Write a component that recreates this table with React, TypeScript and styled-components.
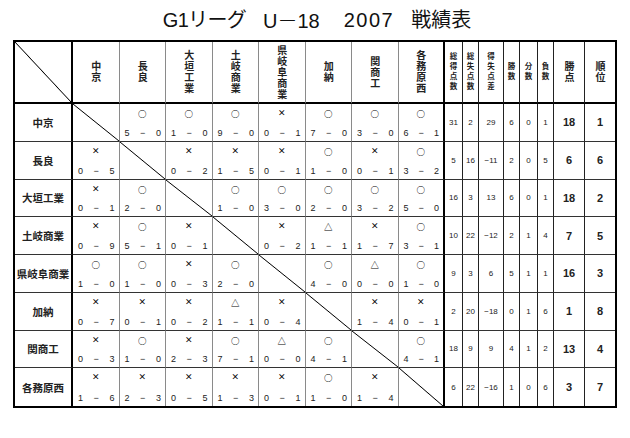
import React from "react";
import styled, { createGlobalStyle, css } from "styled-components";

const Global = createGlobalStyle`
  * { box-sizing: border-box; }
  html, body { margin: 0; padding: 0; background: #fff; }
  body {
    font-family: "Liberation Sans", "Noto Sans CJK JP", sans-serif;
    color: #111;
  }
`;

const Page = styled.div`
  width: 630px;
  height: 438px;
  padding-top: 8px;
`;

const Title = styled.h1`
  margin: 0;
  display: flex;
  justify-content: center;
  font-size: 20px;
  line-height: 24px;
  font-weight: 400;
  color: #111;
  white-space: pre;
  padding-left: 4px;
`;

const TitlePart = styled.span<{ $gap?: number; $spacing?: number }>`
  margin-left: ${(p) => p.$gap ?? 0}px;
  letter-spacing: ${(p) => p.$spacing ?? 0}px;
`;

const Dash = styled.span`
  font-family: "Noto Sans CJK JP", sans-serif;
  font-weight: 300;
`;

const Grid = styled.div`
  margin: 7px 0 0 13px;
  width: max-content;
  display: grid;
  grid-template-columns: 58px repeat(8, 46.5px) 18px 16px 25px 16px 18px 16px 31px 30px;
  grid-template-rows: 62px repeat(8, 37.75px);
  border: 2px solid #000;
`;

const diagonal = css`
  background: linear-gradient(
    to top right,
    transparent calc(50% - 0.8px),
    #000 50%,
    transparent calc(50% + 0.8px)
  );
`;

const Corner = styled.div`
  border-right: 2px solid #000;
  border-bottom: 2px solid #000;
  ${diagonal}
`;

const TeamHead = styled.div<{ $last?: boolean }>`
  border-bottom: 2px solid #000;
  border-right: ${(p) => (p.$last ? "2px solid #000" : "1px solid #8a8a8a")};
  display: flex;
  align-items: center;
  justify-content: center;
`;

const StatHead = styled.div<{ $last?: boolean }>`
  border-bottom: 2px solid #000;
  border-right: ${(p) => (p.$last ? "none" : "1px solid #222")};
  display: flex;
  align-items: center;
  justify-content: center;
`;

const Vertical = styled.span<{ $size: number; $pitch: number }>`
  writing-mode: vertical-rl;
  text-orientation: upright;
  font-family: "Noto Sans CJK JP", sans-serif;
  font-size: ${(p) => p.$size}px;
  line-height: 1.2;
  letter-spacing: ${(p) => p.$pitch - p.$size}px;
  font-weight: 700;
  color: #222;
  white-space: nowrap;
`;

const RowName = styled.div<{ $last?: boolean }>`
  border-right: 2px solid #000;
  border-bottom: ${(p) => (p.$last ? "none" : "1px solid #333")};
  display: flex;
  align-items: center;
  justify-content: center;
  font-family: "Noto Sans CJK JP", sans-serif;
  font-size: 10.5px;
  font-weight: 700;
  color: #222;
  white-space: nowrap;
`;

const Result = styled.div<{ $lastCol?: boolean; $lastRow?: boolean; $diag?: boolean }>`
  border-right: ${(p) => (p.$lastCol ? "2px solid #000" : "1px solid #8a8a8a")};
  border-bottom: ${(p) => (p.$lastRow ? "none" : "1px solid #333")};
  display: flex;
  flex-direction: column;
  justify-content: space-between;
  padding: 3px 0 2px;
  ${(p) => (p.$diag ? diagonal : "")}
`;

const Mark = styled.div<{ $small?: boolean }>`
  text-align: center;
  font-family: "Noto Sans CJK JP", sans-serif;
  font-size: ${(p) => (p.$small ? "8px" : "8.5px")};
  font-weight: 700;
  line-height: 12px;
  color: #000;
`;

const Score = styled.div`
  display: flex;
  justify-content: space-between;
  padding: 0 4px 0 5px;
  font-size: 9px;
  line-height: 12px;
  color: #222;
`;

const Stat = styled.div<{ $big?: boolean; $last?: boolean; $lastRow?: boolean }>`
  border-right: ${(p) => (p.$last ? "none" : "1px solid #222")};
  border-bottom: ${(p) => (p.$lastRow ? "none" : "1px solid #333")};
  display: flex;
  align-items: center;
  justify-content: center;
  font-size: ${(p) => (p.$big ? "11px" : "8px")};
  font-weight: ${(p) => (p.$big ? 700 : 400)};
  color: #222;
  white-space: nowrap;
`;

const teams = ["中京", "長良", "大垣工業", "土岐商業", "県岐阜商業", "加納", "関商工", "各務原西"];

const statHeads: { label: string; big?: boolean }[] = [
  { label: "総得点数" },
  { label: "総失点数" },
  { label: "得失点差" },
  { label: "勝数" },
  { label: "分数" },
  { label: "負数" },
  { label: "勝点", big: true },
  { label: "順位", big: true },
];

type R = [string, number, number] | null;

const results: R[][] = [
  [null, ["○", 5, 0], ["○", 1, 0], ["○", 9, 0], ["×", 0, 1], ["○", 7, 0], ["○", 3, 0], ["○", 6, 1]],
  [["×", 0, 5], null, ["×", 0, 2], ["×", 1, 5], ["×", 0, 1], ["○", 1, 0], ["×", 0, 1], ["○", 3, 2]],
  [["×", 0, 1], ["○", 2, 0], null, ["○", 1, 0], ["○", 3, 0], ["○", 2, 0], ["○", 3, 2], ["○", 5, 0]],
  [["×", 0, 9], ["○", 5, 1], ["×", 0, 1], null, ["×", 0, 2], ["△", 1, 1], ["×", 1, 7], ["○", 3, 1]],
  [["○", 1, 0], ["○", 1, 0], ["×", 0, 3], ["○", 2, 0], null, ["○", 4, 0], ["△", 0, 0], ["○", 1, 0]],
  [["×", 0, 7], ["×", 0, 1], ["×", 0, 2], ["△", 1, 1], ["×", 0, 4], null, ["×", 1, 4], ["×", 0, 1]],
  [["×", 0, 3], ["○", 1, 0], ["×", 2, 3], ["○", 7, 1], ["△", 0, 0], ["○", 4, 1], null, ["○", 4, 1]],
  [["×", 1, 6], ["×", 2, 3], ["×", 0, 5], ["×", 1, 3], ["×", 0, 1], ["○", 1, 0], ["×", 1, 4], null],
];

const stats: string[][] = [
  ["31", "2", "29", "6", "0", "1", "18", "1"],
  ["5", "16", "−11", "2", "0", "5", "6", "6"],
  ["16", "3", "13", "6", "0", "1", "18", "2"],
  ["10", "22", "−12", "2", "1", "4", "7", "5"],
  ["9", "3", "6", "5", "1", "1", "16", "3"],
  ["2", "20", "−18", "0", "1", "6", "1", "8"],
  ["18", "9", "9", "4", "1", "2", "13", "4"],
  ["6", "22", "−16", "1", "0", "6", "3", "7"],
];

export default function App() {
  return (
    <Page>
      <Global />
      <Title>
        <TitlePart $spacing={-0.7}>G1リーグ</TitlePart>
        <TitlePart $gap={17}>
          U<Dash>－</Dash>18
        </TitlePart>
        <TitlePart $gap={24} $spacing={1.5}>
          2007
        </TitlePart>
        <TitlePart $gap={17}>戦績表</TitlePart>
      </Title>
      <Grid>
        <Corner />
        {teams.map((t, i) => (
          <TeamHead key={t} $last={i === teams.length - 1}>
            <Vertical $size={10} $pitch={11}>
              {t}
            </Vertical>
          </TeamHead>
        ))}
        {statHeads.map((s, i) => (
          <StatHead key={s.label} $last={i === statHeads.length - 1}>
            <Vertical $size={s.big ? 10 : 7.5} $pitch={s.big ? 11 : 10}>
              {s.label}
            </Vertical>
          </StatHead>
        ))}
        {teams.map((t, r) => {
          const lastRow = r === teams.length - 1;
          return (
            <React.Fragment key={t}>
              <RowName $last={lastRow}>{t}</RowName>
              {results[r].map((res, c) => (
                <Result key={c} $diag={!res} $lastCol={c === 7} $lastRow={lastRow}>
                  {res && (
                    <>
                      <Mark $small={res[0] === "×"}>{res[0]}</Mark>
                      <Score>
                        <span>{res[1]}</span>
                        <span>−</span>
                        <span>{res[2]}</span>
                      </Score>
                    </>
                  )}
                </Result>
              ))}
              {stats[r].map((v, c) => (
                <Stat key={c} $big={c >= 6} $last={c === 7} $lastRow={lastRow}>
                  {v}
                </Stat>
              ))}
            </React.Fragment>
          );
        })}
      </Grid>
    </Page>
  );
}
